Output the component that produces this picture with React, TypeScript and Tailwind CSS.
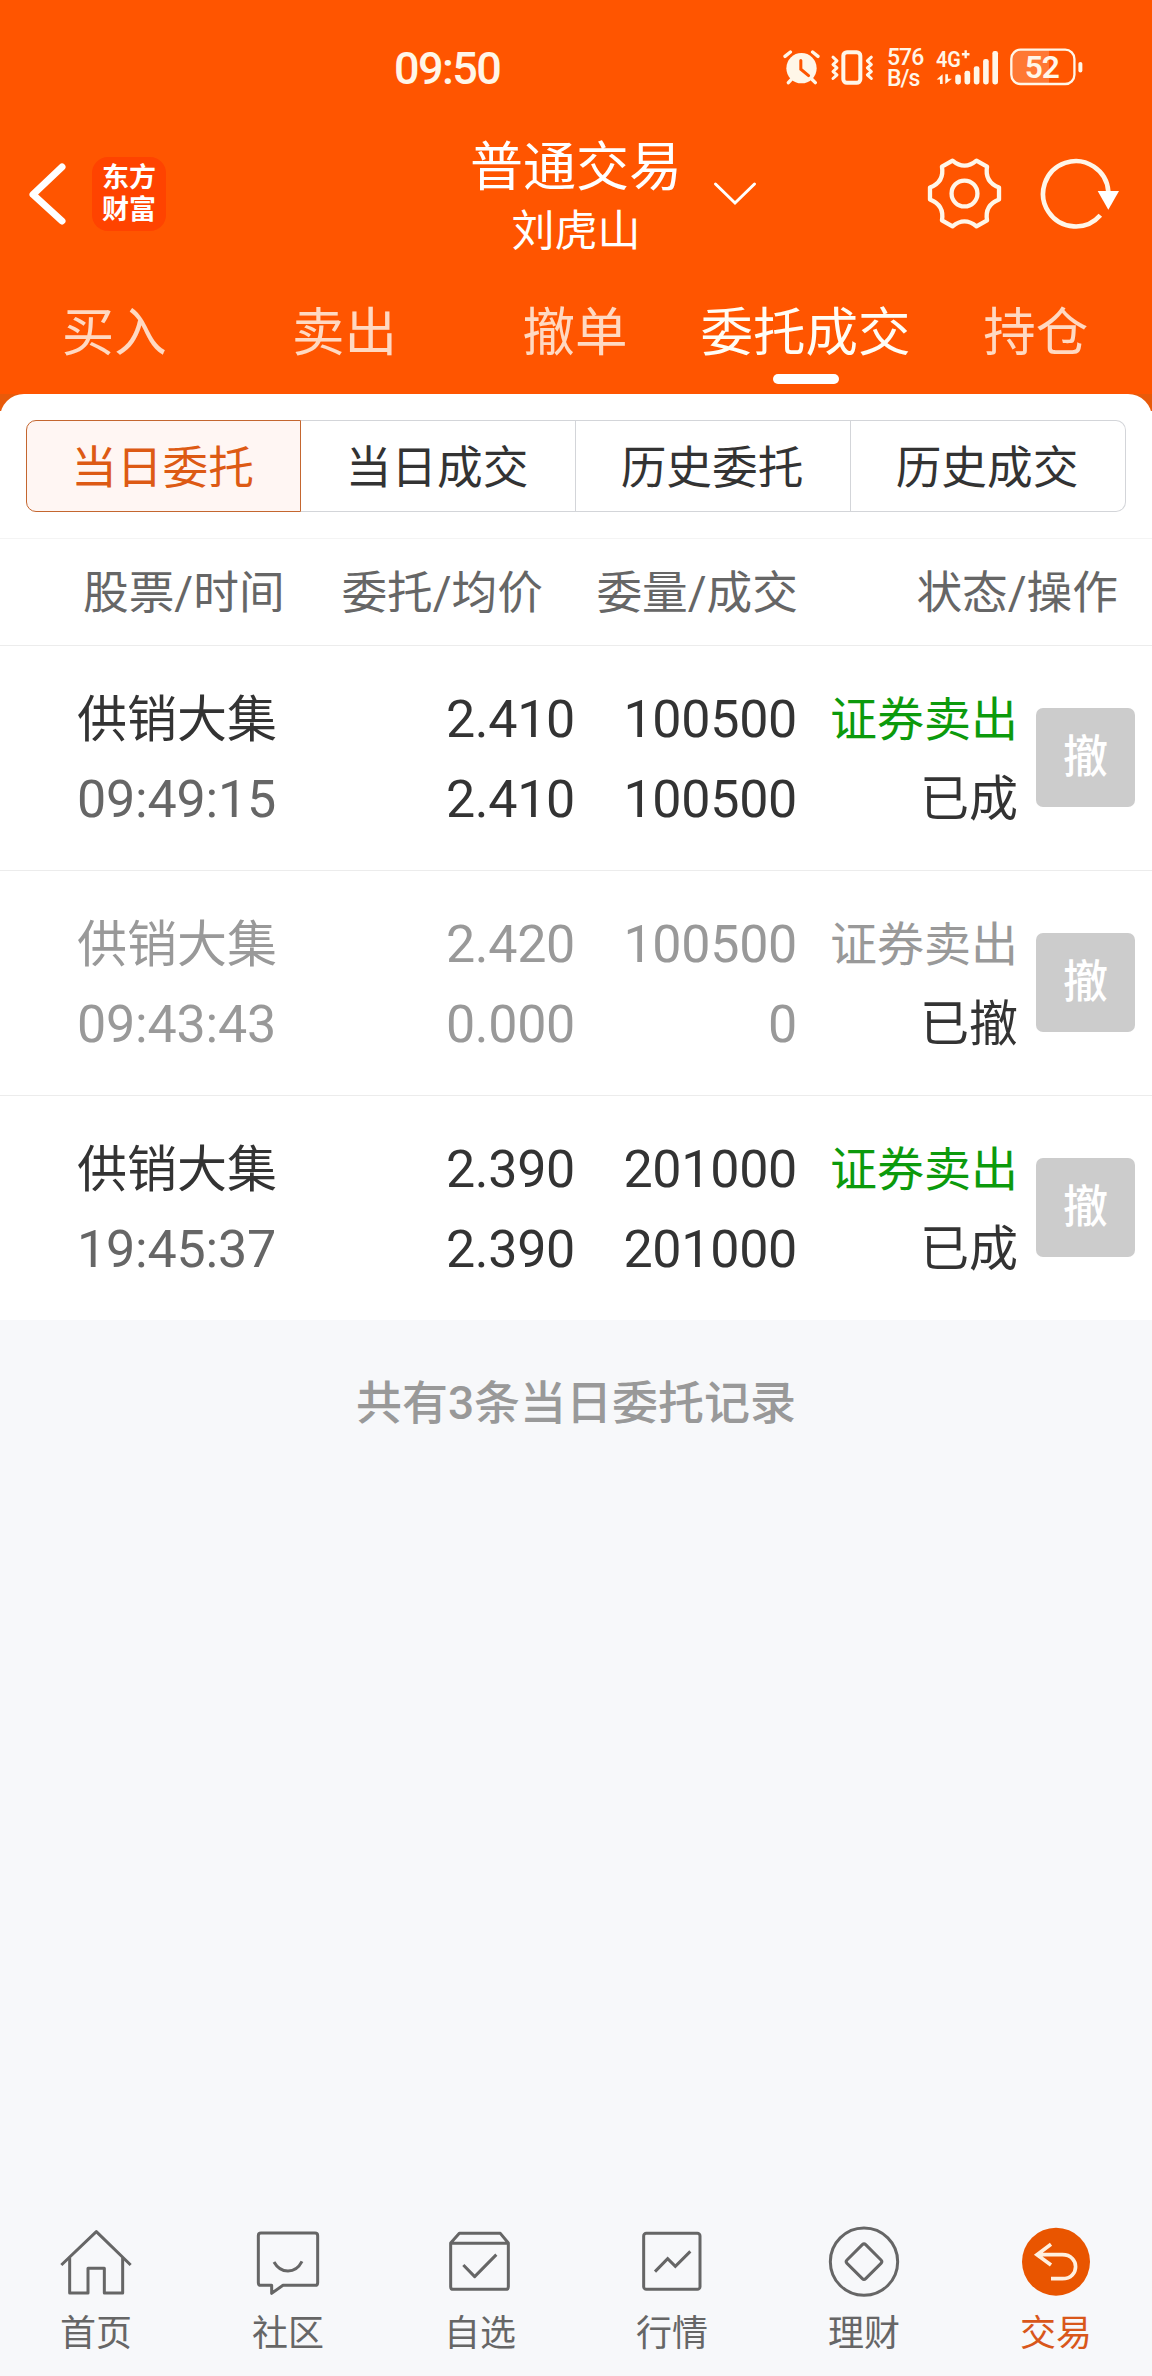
import { type ReactNode } from "react";
import { clsx } from "clsx";

interface Order {
  name: string;
  time: string;
  price: string;
  average: string;
  amount: string;
  filled: string;
  side: string;
  status: string;
  cancelled?: boolean;
}

const orders: Order[] = [
  {
    name: "供销大集",
    time: "09:49:15",
    price: "2.410",
    average: "2.410",
    amount: "100500",
    filled: "100500",
    side: "证券卖出",
    status: "已成",
  },
  {
    name: "供销大集",
    time: "09:43:43",
    price: "2.420",
    average: "0.000",
    amount: "100500",
    filled: "0",
    side: "证券卖出",
    status: "已撤",
    cancelled: true,
  },
  {
    name: "供销大集",
    time: "19:45:37",
    price: "2.390",
    average: "2.390",
    amount: "201000",
    filled: "201000",
    side: "证券卖出",
    status: "已成",
  },
];

const tabs = ["买入", "卖出", "撤单", "委托成交", "持仓"];
const activeTab = "委托成交";

const segments = ["当日委托", "当日成交", "历史委托", "历史成交"];

function StatusBar() {
  return (
    <div className="flex h-[134px] items-center pl-[394px] text-[#fff6e8]">
      <span className="w-[389px] pt-0.5 font-['Roboto',sans-serif] text-[45px] leading-none font-medium tracking-[-1.6px]">
        09:50
      </span>

      <svg viewBox="68 58 110 110" className="h-[37px] w-[37px]">
        <g stroke="currentColor" strokeWidth="10" strokeLinecap="round">
          <path d="M74 80 90 67M156 67l16 13M93 148l-9 10M154 148l10 10" />
          <circle cx="123" cy="115" r="45" fill="currentColor" stroke="none" />
        </g>
        <path d="M121 92v26l23 19" fill="none" stroke="#ff5500" strokeWidth="9" strokeLinecap="round" />
      </svg>

      <svg viewBox="210 58 132 110" className="ml-2.5 h-[37px] w-11" fill="none" stroke="currentColor">
        <rect x="250" y="67" width="51" height="92" rx="11" strokeWidth="12" />
        <path
          d="M219 82l12 11-12 11 12 10-12 11 12 10-12 11M334 82l-12 11 12 11-12 10 12 11-12 10 12 11"
          strokeWidth="9"
          strokeLinecap="round"
          strokeLinejoin="round"
        />
      </svg>

      <div className="ml-[13px] w-[49px] pt-0.5 font-['Roboto',sans-serif] text-[23px] leading-[21px] font-medium tracking-[-1px]">
        576
        <br />
        B/s
      </div>

      <svg viewBox="530 57 190 110" className="h-[37px] w-[63px] overflow-visible" fill="currentColor">
        <text
          x="530"
          y="110"
          className="font-['Roboto',sans-serif] text-[64px] font-semibold"
          textLength="75"
          lengthAdjust="spacingAndGlyphs"
        >
          4G
        </text>
        <path d="M608 72h23M619.500 60v24" stroke="currentColor" strokeWidth="7" />
        <path d="M542 162v-14h-10l18-16v30zM558 132v30l20-16h-12v-14z" />
        <rect x="588" y="133" width="17" height="30" rx="7" />
        <rect x="616" y="122" width="17" height="41" rx="7" />
        <rect x="644" y="108" width="17" height="55" rx="7" />
        <rect x="672" y="86" width="17" height="77" rx="7" />
        <rect x="700" y="62" width="17" height="101" rx="7" />
      </svg>

      <svg viewBox="750 55 225 115" className="ml-2.5 h-[38px] w-[75px]" fill="currentColor">
        <path d="M870 60v104h-86q-28 0-28-28V88q0-28 28-28z" opacity="0.22" />
        <rect x="756" y="60" width="191" height="104" rx="28" fill="none" stroke="currentColor" strokeWidth="7" />
        <rect x="959" y="97" width="12" height="32" rx="6" />
        <text x="797" y="147" className="font-['Roboto',sans-serif] text-[96px] font-semibold" textLength="106">
          52
        </text>
      </svg>
    </div>
  );
}

function TitleBar() {
  return (
    <div className="flex h-[150px] items-start text-white">
      <svg viewBox="0 0 40 62" className="mt-[29px] ml-[27px] h-[62px] w-10" fill="none">
        <path d="M35 4 6 31.500 35 58" stroke="currentColor" strokeWidth="7" strokeLinecap="round" strokeLinejoin="round" />
      </svg>

      <div className="mt-[23px] ml-[25px] h-[74px] w-[74px] rounded-2xl bg-[#ff4300] pt-[3px] text-center text-[27px] leading-[32px] font-bold">
        东方
        <br />
        财富
      </div>

      <div className="ml-[276px] flex w-[268px] flex-col items-center leading-none">
        <span className="mt-px text-[53px] leading-[56px]">普通交易</span>
        <span className="mt-2 text-[43px] leading-[56px]">刘虎山</span>
      </div>

      <svg viewBox="0 0 44 26" className="mt-[47px] ml-[3px] h-[26px] w-11" fill="none">
        <path d="M2.500 3 22 22 41.500 3" stroke="currentColor" strokeWidth="3" strokeLinecap="round" />
      </svg>

      <svg viewBox="140 74 232 232" className="mt-[21px] ml-[169px] h-[77px] w-[77px]" fill="none" stroke="#fff6e8">
        <path
          d="M220 91Q256 121 292 91L324 109Q316 155 360 172V208Q316 225 324 271L292 289Q256 259 220 289L188 271Q196 225 152 208V172Q196 155 188 109Z"
          strokeWidth="13"
          strokeLinejoin="round"
        />
        <circle cx="256" cy="190" r="39" strokeWidth="13" />
      </svg>

      <svg viewBox="480 82 240 222" className="mt-[23px] ml-[37px] h-[74px] w-20">
        <path d="M661 257A98 98 0 1 1 685 186" fill="none" stroke="#fff6e8" strokeWidth="14" />
        <path d="M653 184h64l-32 56z" fill="#fff" />
      </svg>
    </div>
  );
}

function Tabs() {
  return (
    <div className="flex h-[110px]">
      {tabs.map((tab) => (
        <div key={tab} className="flex flex-1 flex-col items-center">
          <span
            className={clsx(
              "mt-[6px] pr-0.5 text-[52.5px] leading-[76px] whitespace-nowrap",
              tab === activeTab ? "text-[#fffdf5]" : "text-[#ffd9c2]",
            )}
          >
            {tab}
          </span>
          {tab === activeTab && <span className="mt-[8px] h-2.5 w-[66px] rounded-full bg-white" />}
        </div>
      ))}
    </div>
  );
}

function Segments() {
  return (
    <div className="mx-[26px] flex h-[92px]">
      {segments.map((segment, i) => (
        <button
          key={segment}
          className={clsx(
            "w-1/4 border pr-0.5 pb-1 text-[45.7px]",
            i === 0
              ? "rounded-l-[10px] border-[#c4662f] bg-[#fff6f3] text-[#dd5a14]"
              : "border-l-0 border-[#d3d5d9] text-[#333]",
            i === segments.length - 1 && "rounded-r-[10px]",
          )}
        >
          {segment}
        </button>
      ))}
    </div>
  );
}

function OrderRow({ order }: { order: Order }) {
  const dim = order.cancelled;
  return (
    <div
      className={clsx(
        "grid h-[225px] grid-cols-[326px_249px_222px_221px_1fr] items-center border-t border-[#ececec] pt-[3px] font-['Roboto','Noto_Sans_CJK_SC',sans-serif] text-[52px] leading-[80px]",
        dim ? "text-[#999]" : "text-[#333]",
      )}
    >
      <div className="pl-[77px]">
        <div className="text-[50px]">{order.name}</div>
        <div className={clsx("tracking-[-0.2px]", dim ? "text-[#999]" : "text-[#666]")}>{order.time}</div>
      </div>
      <div className="text-right tracking-[-0.3px]">
        <div>{order.price}</div>
        <div>{order.average}</div>
      </div>
      <div className="text-right tracking-[-0.3px]">
        <div>{order.amount}</div>
        <div>{order.filled}</div>
      </div>
      <div className="text-right">
        <div className={clsx("text-[47px]", !dim && "text-[#0c9a0c]")}>{order.side}</div>
        <div className="text-[49px] text-[#333]">{order.status}</div>
      </div>
      <button className="mb-[5px] ml-[18px] h-[99px] w-[99px] rounded-[7px] bg-[#ccc] text-[45px] leading-[99px] font-medium text-white">
        撤
      </button>
    </div>
  );
}

function NavItem({ label, active, children }: { label: string; active?: boolean; children: ReactNode }) {
  return (
    <div className={clsx("flex flex-1 flex-col items-center", active ? "text-[#d9571a]" : "text-[#666]")}>
      {children}
      <span className="text-[36px] leading-[56px]">{label}</span>
    </div>
  );
}

const navIcon = "h-20 w-20 fill-none stroke-current stroke-[9]";

function BottomNav() {
  return (
    <nav className="flex h-[154px]">
      <NavItem label="首页">
        <svg viewBox="168 67 240 240" className={navIcon} strokeLinejoin="round">
          <path d="M184 196 289 96 392 196" />
          <path d="M209 174V280H264V206H313V280H368V174" />
        </svg>
      </NavItem>
      <NavItem label="社区">
        <svg viewBox="744 67 240 240" className={navIcon} strokeLinejoin="round">
          <path d="M783 100H945Q953 100 953 108V249Q953 257 945 257H849L815 281V257H783Q775 257 775 249V108Q775 100 783 100Z" />
          <path d="M822 187Q837 214 864 214Q891 214 906 185" />
        </svg>
      </NavItem>
      <NavItem label="自选">
        <svg viewBox="120 67 240 240" className={navIcon} strokeLinejoin="round">
          <path d="M152 130 178 101H301L325 130V261Q325 269 317 269H160Q152 269 152 261ZM152 131H325" />
          <path d="M190 196 224 231 289 165" />
        </svg>
      </NavItem>
      <NavItem label="行情">
        <svg viewBox="696 67 240 240" className={navIcon}>
          <rect x="731" y="101" width="169" height="168" rx="8" />
          <path d="M765 216 803 177 826 200 871 155" />
        </svg>
      </NavItem>
      <NavItem label="理财">
        <svg viewBox="216 67 240 240" className={navIcon} strokeLinejoin="round">
          <circle cx="336" cy="186" r="101" />
          <path d="M331 135Q336 130 341 135L387 181Q392 186 387 191L341 237Q336 242 331 237L285 191Q280 186 285 181Z" />
        </svg>
      </NavItem>
      <NavItem label="交易" active>
        <svg viewBox="792 67 240 240" className="h-20 w-20">
          <circle cx="912" cy="186" r="102" fill="#e95500" />
          <path
            d="M897 134 855 165 897 196M855 165H931C984 165 984 237 931 237H897"
            fill="none"
            stroke="#fff0e0"
            strokeWidth="11"
          />
        </svg>
      </NavItem>
    </nav>
  );
}

export default function App() {
  return (
    <div className="flex h-[2376px] w-[1152px] flex-col overflow-hidden bg-[#f7f8fa] font-['Noto_Sans_CJK_SC',sans-serif]">
      <header className="h-[394px] bg-[#ff5500]">
        <StatusBar />
        <TitleBar />
        <Tabs />
      </header>

      <main className="flex-1">
        <div className="bg-[linear-gradient(#e85a0a_17px,#fff_17px)]">
          <div className="rounded-t-3xl bg-white pt-[26px]">
            <Segments />
            <div className="mt-[26px] grid h-[107px] grid-cols-[326px_217px_255px_320px] items-center border-t border-[#f4f4f4] pt-1 font-['Roboto','Noto_Sans_CJK_SC',sans-serif] text-[45.7px] text-[#666]">
              <div className="pl-[83px]">股票/时间</div>
              <div className="text-right">委托/均价</div>
              <div className="text-right">委量/成交</div>
              <div className="text-right">状态/操作</div>
            </div>
            {orders.map((order) => (
              <OrderRow key={order.time} order={order} />
            ))}
          </div>
        </div>
        <p className="mt-[50px] text-center font-['Roboto','Noto_Sans_CJK_SC',sans-serif] text-[46px] leading-[66px] font-medium text-[#999]">
          共有3条当日委托记录
        </p>
      </main>

      <BottomNav />
    </div>
  );
}
